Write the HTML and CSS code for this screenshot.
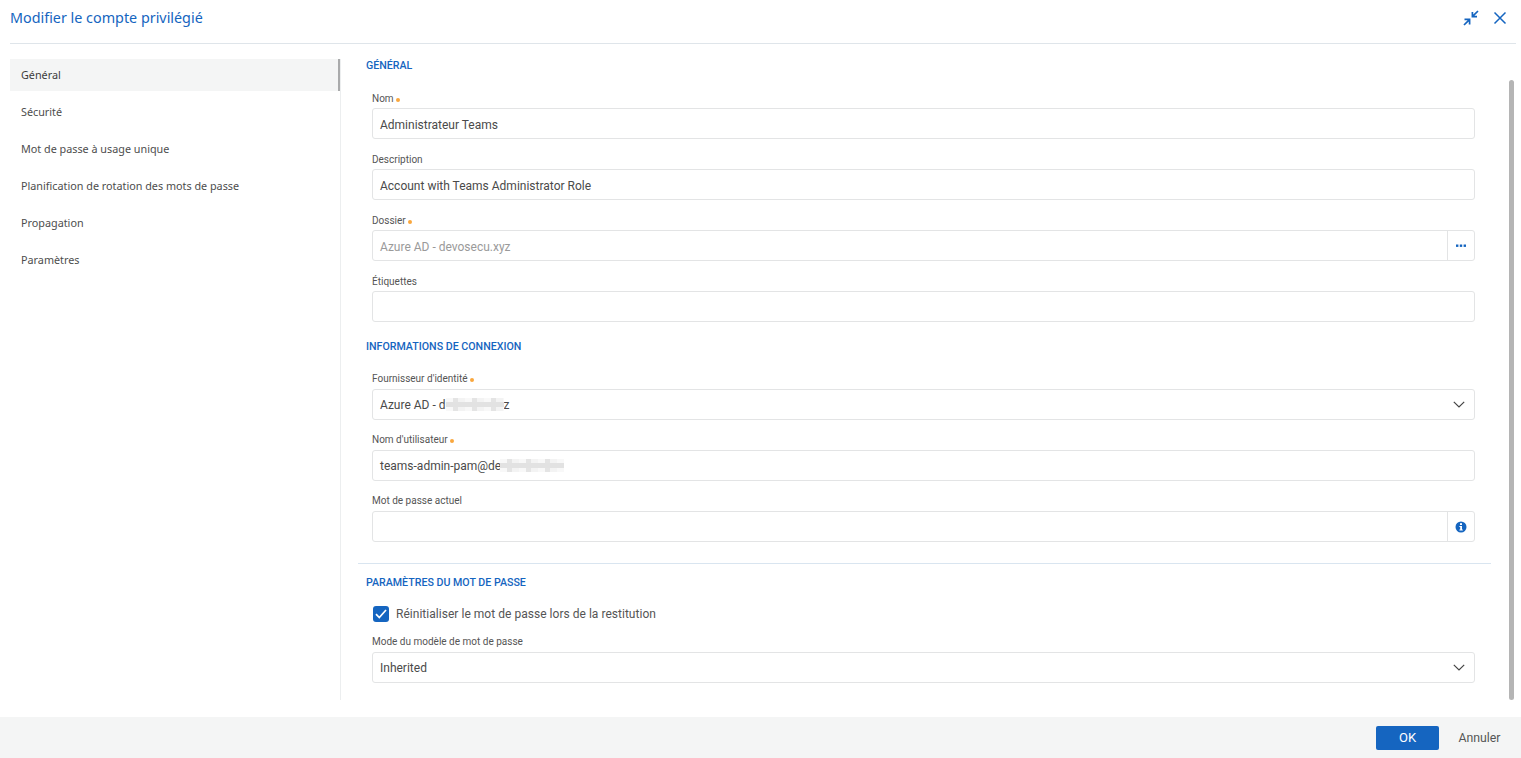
FILE: index.html
```html
<!DOCTYPE html>
<html lang="fr">
<head>
<meta charset="utf-8">
<title>Modifier le compte privilégié</title>
<link rel="stylesheet" href="styles.css">
</head>
<body>
<div class="dialog">
  <header class="head">
    <h1 class="title">Modifier le compte privilégié</h1>
    <div class="head-actions">
      <svg class="icon" width="16" height="16" viewBox="0 0 16 16" fill="none" stroke="#1565c0" stroke-width="1.7"><path d="M15 1 9.8 6.2M9.4 2V6.6H14M1 15 6.2 9.8M1.5 9.4H6.6V14.5"/></svg>
      <svg class="icon" width="14" height="14" viewBox="0 0 14 14" fill="none" stroke="#1565c0" stroke-width="1.5"><path d="M1.5 1.5 12.5 12.5M12.5 1.5 1.5 12.5"/></svg>
    </div>
  </header>
  <div class="main">
    <nav class="side">
      <a class="side-item active">Général</a>
      <a class="side-item">Sécurité</a>
      <a class="side-item">Mot de passe à usage unique</a>
      <a class="side-item">Planification de rotation des mots de passe</a>
      <a class="side-item">Propagation</a>
      <a class="side-item">Paramètres</a>
    </nav>
    <div class="content">
      <section class="sec sec-general">
        <h2 class="sec-title">GÉNÉRAL</h2>
        <div class="field"><label class="lbl">Nom<i class="req"></i></label><div class="box"><span class="val">Administrateur Teams</span></div></div>
        <div class="field"><label class="lbl">Description</label><div class="box"><span class="val">Account with Teams Administrator Role</span></div></div>
        <div class="field"><label class="lbl">Dossier<i class="req"></i></label><div class="box"><span class="val muted">Azure AD - devosecu.xyz</span><span class="addon"><svg width="10" height="4" viewBox="0 0 10 4" fill="#1565c0"><rect x="0" y="0.5" width="2.4" height="2.4"/><rect x="3.8" y="0.5" width="2.4" height="2.4"/><rect x="7.6" y="0.5" width="2.4" height="2.4"/></svg></span></div></div>
        <div class="field"><label class="lbl">Étiquettes</label><div class="box"></div></div>
      </section>
      <section class="sec sec-login">
        <h2 class="sec-title">INFORMATIONS DE CONNEXION</h2>
        <div class="field"><label class="lbl">Fournisseur d'identité<i class="req"></i></label><div class="box"><span class="val">Azure AD - d<span class="blur blur-a"></span>z</span><svg class="chev" width="12" height="7" viewBox="0 0 12 7" fill="none" stroke="#444" stroke-width="1.2"><path d="M.8.8 6 6 11.2.8"/></svg></div></div>
        <div class="field"><label class="lbl">Nom d'utilisateur<i class="req"></i></label><div class="box"><span class="val">teams-admin-pam@de<span class="blur blur-b"></span></span></div></div>
        <div class="field"><label class="lbl">Mot de passe actuel</label><div class="box"><span class="val"></span><span class="addon"><svg width="12" height="12" viewBox="0 0 12 12"><circle cx="6" cy="6" r="5.5" fill="#1565c0"/><rect x="5" y="2.2" width="2" height="1.8" fill="#fff"/><path d="M4.4 5h2.6v3.6h.8v1H4.4v-1h.8V6h-.8z" fill="#fff"/></svg></span></div></div>
      </section>
      <section class="sec sec-pass">
        <h2 class="sec-title">PARAMÈTRES DU MOT DE PASSE</h2>
        <div class="check-row">
          <span class="check"><svg width="12" height="10" viewBox="0 0 12 10" fill="none" stroke="#fff" stroke-width="1.7"><path d="M1 5.2 4.3 8.6 11 1"/></svg></span>
          <span class="check-text">Réinitialiser le mot de passe lors de la restitution</span>
        </div>
        <div class="field"><label class="lbl">Mode du modèle de mot de passe</label><div class="box"><span class="val">Inherited</span><svg class="chev" width="12" height="7" viewBox="0 0 12 7" fill="none" stroke="#444" stroke-width="1.2"><path d="M.8.8 6 6 11.2.8"/></svg></div></div>
      </section>
    </div>
    <div class="scroll"><div class="thumb"></div></div>
  </div>
  <footer class="foot">
    <button class="ok">OK</button>
    <button class="cancel">Annuler</button>
  </footer>
</div>
</body>
</html>
```
FILE: styles.css
```css
* { box-sizing: border-box; }
html, body { margin: 0; height: 100%; background: #fff; overflow: hidden; }
body { font-family: Roboto, "Liberation Sans", sans-serif; color: #4a4a4a; }
.dialog { width: 1521px; height: 758px; display: flex; flex-direction: column; }
.head { height: 44px; margin: 0 5px 0 10px; border-bottom: 1px solid #dfe5ea; display: flex; align-items: center; justify-content: space-between; padding-bottom: 7px; }
.title { margin: 0; font: 400 14.35px/22px "Noto Sans", sans-serif; color: #1565c0; }
.head-actions { display: flex; align-items: center; gap: 14px; padding-right: 9px; }
.icon { display: block; }
.main { height: 673px; display: flex; }
.side { width: 331px; margin: 15px 0 17px 10px; border-right: 1px solid #eceeef; flex: none; }
.side-item { display: flex; align-items: center; height: 32px; margin-bottom: 5px; padding: 0 0 0 11px; font: 400 10.8px/16px "Noto Sans", sans-serif; color: #4d4d4d; }
.side-item.active { background: #f4f5f5; border-right: 2px solid #a9aaab; color: #3c3c3c; width: 330px; }
.content { width: 1133px; margin-left: 17px; flex: none; }
.sec-title { margin: 0 0 0 8px; height: 14px; font: 500 10.65px/14px Roboto, sans-serif; color: #1565c0; }
.sec-general { padding-top: 15px; height: 288px; }
.sec-general .sec-title { margin-bottom: 18px; }
.sec-general .val { padding-top: 2px; }
.sec-login { padding-top: 8px; height: 232px; border-bottom: 1px solid #d9e5f0; }
.sec-login .sec-title { margin-bottom: 18px; }
.sec-login .lbl { padding-bottom: 3px; }
.field { margin: 0 16px 0 14px; height: 61px; }
.lbl { display: flex; align-items: center; height: 17px; font-size: 10px; line-height: 14px; color: #555; padding-bottom: 1px; }
.req { width: 4px; height: 4px; border-radius: 50%; background: #f9a73e; margin-left: 2px; margin-top: 1px; }
.box { height: 31px; border: 1px solid #e3e4e5; border-radius: 3px; display: flex; align-items: center; background: #fff; }
.val { flex: 1; padding-left: 7px; font-size: 12px; color: #4a4a4a; white-space: nowrap; display: flex; align-items: center; }
.muted { color: #9a9a9a; }
.addon { width: 27px; height: 29px; border-left: 1px solid #e3e4e5; display: flex; align-items: center; justify-content: center; flex: none; }
.chev { margin-right: 9px; flex: none; }
.blur { display: inline-block; height: 13px; filter: blur(.6px); background-color: #f1f1f1; background-image: linear-gradient(#fff0 0 4px, #e2e2e2 4px 9px, #fff0 9px), repeating-linear-gradient(90deg, #f8f8f8 0 7px, #e4e4e4 7px 12px, #f3f3f3 12px 19px); }
.blur-a { width: 58px; }
.blur-b { width: 64px; margin-left: -1px; }
.sec-pass { padding-top: 12px; }
.sec-pass .sec-title { margin-bottom: 15px; }
.check-row { display: flex; align-items: center; gap: 7px; margin-left: 15px; height: 18px; margin-bottom: 11px; }
.check { width: 16px; height: 16px; border-radius: 3px; background: #1565c0; display: flex; align-items: center; justify-content: center; }
.check-text { font: 400 12px/16px Roboto, sans-serif; color: #555; letter-spacing: .03px; }
.sec-pass .lbl { height: 18px; padding-bottom: 3px; }
.scroll { margin: 36px 0 17px 18px; width: 5px; }
.thumb { height: 100%; width: 5px; background: #b5b5b5; border-radius: 3px; }
.foot { height: 41px; background: #f4f5f5; display: flex; align-items: center; justify-content: flex-end; padding-right: 20px; }
.ok { width: 63px; height: 24px; border: 0; border-radius: 2px; background: #1565c0; color: #fff; font: 400 13px/16px Roboto, sans-serif; padding: 0; }
.cancel { width: 43px; margin-left: 19px; padding: 0; border: 0; background: none; color: #555; font: 400 12.3px/16px Roboto, sans-serif; }
```
